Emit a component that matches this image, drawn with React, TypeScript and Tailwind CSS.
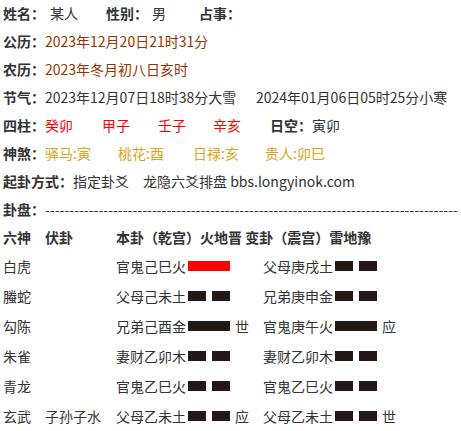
import React from 'react';

const Yang = ({ red }: { red?: boolean }) => (
  <span className={`inline-block w-[42px] h-[10px] ${red ? 'bg-[#ff0000]' : 'bg-[#231815]'}`} />
);

const Yin = () => (
  <span className="inline-flex w-[42px] h-[10px] justify-between">
    <span className="w-[18px] h-full bg-[#231815]" />
    <span className="w-[18px] h-full bg-[#231815]" />
  </span>
);

type Yao = { text: string; yang: boolean; red?: boolean; mark?: string };

const rows: { shen: string; fu: string; ben: Yao; bian: Yao }[] = [
  { shen: '白虎', fu: '', ben: { text: '官鬼己巳火', yang: true, red: true }, bian: { text: '父母庚戌土', yang: false } },
  { shen: '螣蛇', fu: '', ben: { text: '父母己未土', yang: false }, bian: { text: '兄弟庚申金', yang: false } },
  { shen: '勾陈', fu: '', ben: { text: '兄弟己酉金', yang: true, mark: '世' }, bian: { text: '官鬼庚午火', yang: true, mark: '应' } },
  { shen: '朱雀', fu: '', ben: { text: '妻财乙卯木', yang: false }, bian: { text: '妻财乙卯木', yang: false } },
  { shen: '青龙', fu: '', ben: { text: '官鬼乙巳火', yang: false }, bian: { text: '官鬼乙巳火', yang: false } },
  { shen: '玄武', fu: '子孙子水', ben: { text: '父母乙未土', yang: false, mark: '应' }, bian: { text: '父母乙未土', yang: false, mark: '世' } },
];

const YaoCell = ({ y }: { y: Yao }) => (
  <div className="flex items-center">
    <span>{y.text}</span>
    <span className="ml-[2px] flex items-center">{y.yang ? <Yang red={y.red} /> : <Yin />}</span>
    {y.mark && <span className="ml-[5px]">{y.mark}</span>}
  </div>
);

export default function App() {
  return (
    <div className="w-[461px] h-[431px] overflow-hidden bg-white pl-[3px] text-[14px] text-[#333] font-['Noto_Sans_CJK_SC',sans-serif]">
      <div className="-mt-px leading-[28px] whitespace-nowrap">
        <div className="flex">
          <b>姓名：</b>
          <span className="ml-[5px] w-[56px]">某人</span>
          <b>性别：</b>
          <span className="ml-[4px] w-[47px]">男</span>
          <b>占事：</b>
        </div>
        <div>
          <b>公历：</b>
          <span className="text-[#993300]">2023年12月20日21时31分</span>
        </div>
        <div>
          <b>农历：</b>
          <span className="text-[#993300]">2023年冬月初八日亥时</span>
        </div>
        <div className="flex">
          <b>节气：</b>
          <span className="w-[211px]">2023年12月07日18时38分大雪</span>
          <span>2024年01月06日05时25分小寒</span>
        </div>
        <div className="flex">
          <b>四柱：</b>
          <span className="text-[#ff0000] w-[57px]">癸卯</span>
          <span className="text-[#ff0000] w-[56px]">甲子</span>
          <span className="text-[#ff0000] w-[55px]">壬子</span>
          <span className="text-[#ff0000] w-[57px]">辛亥</span>
          <b>日空：</b>
          <span>寅卯</span>
        </div>
        <div className="flex text-[#daa520]">
          <b className="text-[#333]">神煞：</b>
          <span className="w-[73px]">驿马:寅</span>
          <span className="w-[75px]">桃花:酉</span>
          <span className="w-[72px]">日禄:亥</span>
          <span>贵人:卯巳</span>
        </div>
        <div className="flex">
          <b>起卦方式：</b>
          <span className="w-[70px]">指定卦爻</span>
          <span>龙隐六爻排盘 bbs.longyinok.com</span>
        </div>
        <div className="flex">
          <b>卦盘：</b>
          <span>{'-'.repeat(85)}</span>
        </div>
        <div className="flex font-bold">
          <span className="w-[42px]">六神</span>
          <span className="w-[71px]">伏卦</span>
          <span>本卦（乾宫）火地晋 变卦（震宫）雷地豫</span>
        </div>
      </div>
      <div className="whitespace-nowrap">
        {rows.map(r => (
          <div key={r.shen} className="grid grid-cols-[42px_71px_147px_1fr] h-[30px] items-center">
            <span>{r.shen}</span>
            <span>{r.fu}</span>
            <YaoCell y={r.ben} />
            <YaoCell y={r.bian} />
          </div>
        ))}
      </div>
    </div>
  );
}
